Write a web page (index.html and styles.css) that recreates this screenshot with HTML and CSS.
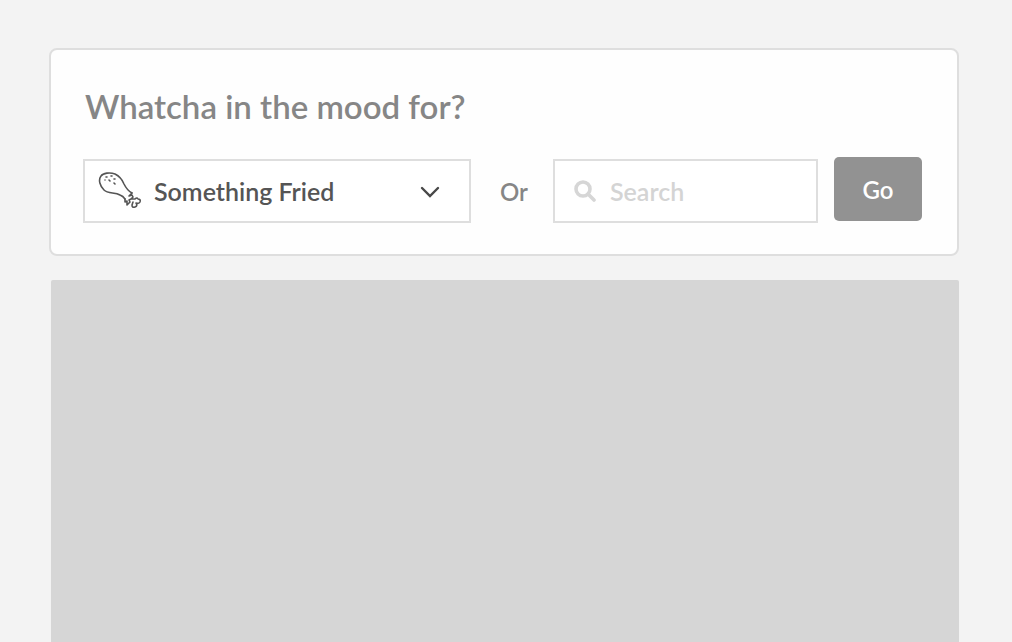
FILE: index.html
```html
<!DOCTYPE html>
<html lang="en">
<head>
<meta charset="utf-8">
<meta name="viewport" content="width=device-width, initial-scale=1">
<title>Food finder</title>
<link rel="stylesheet" href="styles.css">
</head>
<body>
<main class="page">
  <form class="finder">
    <h1 class="finder-title">Whatcha in the mood for?</h1>
    <div class="finder-row">
      <div class="field field-mood">
        <svg class="icon-drumstick" viewBox="0 0 44 38" aria-hidden="true">
          <path d="M34 21C30 19 28 16 26 12C24 7 21 4 17 2C12 0 5 1 3 4C0 8 2 14 6 18C10 22 17 20 22 23Q25 24 27 27"/>
          <path d="M34 21L31 24L34 23L35 25L33 27L37 27Q39 25 40 27Q43 27 42 30Q41 32 38 31Q40 34 37 35Q34 36 34 33L35 30M33 27L31 28L32 30L29 33L29 29L27 30L27 27"/>
          <path d="M8 5L9 5M13 4L14 4M11 8L12 9M16 7L17 7M16 11L17 12M7 8L7 8"/>
        </svg>
        <select class="control mood-select" aria-label="Mood">
          <option>Something Fried</option>
        </select>
        <svg class="icon-chevron" viewBox="0 0 20 12" aria-hidden="true"><path d="M2 2L10 10L18 2"/></svg>
      </div>
      <span class="or">Or</span>
      <div class="field field-search">
        <svg class="icon-search" viewBox="0 0 22 22" aria-hidden="true"><circle cx="9" cy="9" r="7"/><path d="M14 14L20 20"/></svg>
        <input class="control search-input" type="search" placeholder="Search" aria-label="Search">
      </div>
      <button class="go" type="submit">Go</button>
    </div>
  </form>
  <section class="results" aria-label="Results"></section>
</main>
</body>
</html>
```
FILE: styles.css
```css
* { box-sizing: border-box; }

body {
  margin: 0;
  background: #f3f3f3;
  color: #868686;
  font-family: Lato, "Liberation Sans", sans-serif;
  font-weight: 600;
}

.page {
  display: flex;
  flex-direction: column;
  gap: 24px;
  min-height: 100vh;
  padding: 48px 53px 0 49px;
}

.finder {
  padding: 36px 35px 31px 32px;
  border: 2px solid #dedede;
  border-radius: 8px;
  background: #fefefe;
}

.finder-title {
  margin: 0 0 33px;
  padding-left: 2px;
  font-size: 33px;
  font-weight: 600;
  line-height: 40px;
}

.finder-row {
  display: flex;
  align-items: center;
  font-size: 24px;
}

.field {
  position: relative;
  font-size: 25px;
}
.field-mood { flex: 388 1 0; }
.field-search { flex: 265 1 0; }

.control {
  display: block;
  width: 100%;
  height: 64px;
  border: 2px solid #dedede;
  border-radius: 0;
  outline: 0;
  background: #fff;
  font: inherit;
  appearance: none;
}

.mood-select {
  padding: 0 56px 0 69px;
  color: #555;
}

.search-input {
  padding: 0 16px 0 55px;
  color: #555;
}

.search-input::placeholder { color: #d4d4d4; opacity: 1; }

.field svg {
  position: absolute;
  fill: none;
  pointer-events: none;
}

.icon-drumstick {
  top: 13px;
  left: 15px;
  width: 44px;
  height: 38px;
  stroke: #555;
  stroke-width: 1.6;
  stroke-linecap: round;
  stroke-linejoin: round;
}

.icon-chevron {
  top: 27px;
  right: 31px;
  width: 20px;
  height: 12px;
  stroke: #484848;
  stroke-width: 2.4;
  stroke-linecap: round;
}

.icon-search {
  top: 21px;
  left: 21px;
  width: 22px;
  height: 22px;
  stroke: #d6d6d6;
  stroke-width: 3.6;
  stroke-linecap: round;
}

.or { padding: 0 25px 0 29px; }

.go {
  width: 88px;
  height: 64px;
  margin: -2px 0 2px 16px;
  padding: 0;
  border: 0;
  border-radius: 5px;
  background: #929292;
  color: #fff;
  font: inherit;
}

.results {
  flex: 1;
  margin-left: 2px;
  border-radius: 2px 2px 0 0;
  background: #d6d6d6;
}
```
